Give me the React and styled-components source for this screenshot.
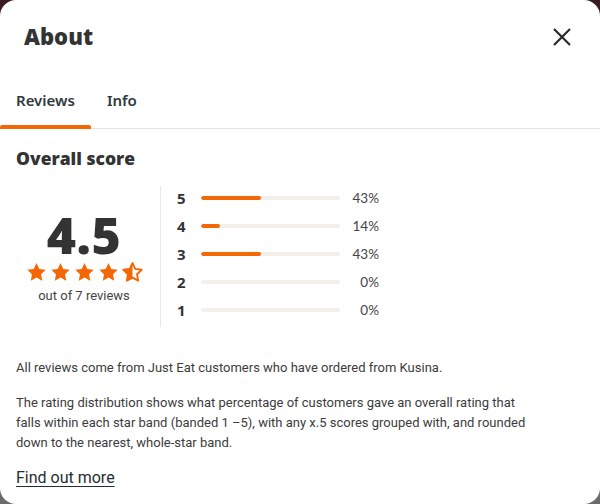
import React from "react";
import styled, { createGlobalStyle } from "styled-components";

const GlobalStyle = createGlobalStyle`
  html, body {
    margin: 0;
    padding: 0;
  }
  body {
    background: linear-gradient(180deg, #3b1a22 0%, #4a3034 40%, #6b6b6b 100%);
    font-family: "Roboto", "Liberation Sans", sans-serif;
    color: #242e30;
  }
`;

const Modal = styled.div`
  width: 600px;
  height: 504px;
  box-sizing: border-box;
  background: #fff;
  border-radius: 16px;
  overflow: hidden;
  display: flex;
  flex-direction: column;
`;

const Header = styled.div`
  display: flex;
  align-items: center;
  justify-content: space-between;
  height: 74px;
  padding: 0 28px 0 24px;
`;

const Title = styled.h1`
  margin: 0;
  font-family: "Open Sans", "Noto Sans", sans-serif;
  font-weight: 800;
  font-size: 22px;
  color: #333;
  margin-top: -2px;
`;

const CloseButton = styled.button`
  border: none;
  background: none;
  padding: 0;
  display: flex;
  cursor: pointer;
`;

const Tabs = styled.div`
  display: flex;
  border-bottom: 1px solid #e3e3e3;
  height: 54px;
`;

const Tab = styled.div`
  position: relative;
  padding: 0 16px;
  display: flex;
  align-items: center;
  margin-top: -3px;
  font-family: "Noto Sans", sans-serif;
  font-size: 15px;
  font-weight: 600;
  color: #2f3a3c;
  &::after {
    content: "";
    display: ${(p) => (p.$active ? "block" : "none")};
    position: absolute;
    left: 0;
    right: 0;
    bottom: -1px;
    height: 4px;
    border-radius: 2px 2px 0 0;
    background: #f36805;
  }
`;

const Body = styled.div`
  padding: 17px 16px 0;
`;

const SectionTitle = styled.h2`
  margin: 0;
  font-family: "Open Sans", "Noto Sans", sans-serif;
  font-weight: 800;
  font-size: 17.5px;
  color: #333;
`;

const Score = styled.div`
  display: flex;
  margin-top: 16px;
`;

const Summary = styled.div`
  width: 136px;
  padding-right: 8px;
  display: flex;
  flex-direction: column;
  align-items: center;
  justify-content: center;
  border-right: 1px solid #e6e6e6;
  height: 141px;
`;

const BigNumber = styled.div`
  font-family: "Noto Sans", sans-serif;
  font-weight: 900;
  font-size: 50px;
  line-height: 48px;
  color: #333;
  letter-spacing: 0.5px;
`;

const Stars = styled.div`
  display: flex;
  gap: 3px;
  margin-top: 3px;
`;

const ReviewCount = styled.div`
  margin-top: 5px;
  font-size: 13px;
  color: #444;
`;

const Distribution = styled.div`
  display: flex;
  flex-direction: column;
  gap: 10px;
  padding: 3px 0 0 16px;
`;

const Row = styled.div`
  display: flex;
  align-items: center;
  height: 18px;
`;

const Band = styled.span`
  width: 24px;
  font-family: "Noto Sans", sans-serif;
  font-weight: 700;
  font-size: 15px;
  color: #333;
`;

const Track = styled.div`
  width: 139px;
  height: 4px;
  border-radius: 2px;
  background: #f3f0ec;
  overflow: hidden;
`;

const Fill = styled.div`
  height: 100%;
  border-radius: 2px;
  background: #f36805;
`;

const Percent = styled.span`
  width: 39px;
  text-align: right;
  font-family: "Lato", sans-serif;
  font-size: 13.5px;
  color: #444;
`;

const Text = styled.p`
  margin: 0;
  margin-top: ${(p) => p.$top || 0}px;
  max-width: 512px;
  font-size: 13px;
  line-height: 20px;
  color: #3c3c3c;
`;

const MoreLink = styled.a`
  display: inline-block;
  margin-top: 15px;
  font-size: 16px;
  color: #242e30;
  text-decoration: underline;
  text-underline-offset: 3px;
`;

const starPath =
  "M12 1.2l3.2 6.7 7.3 1-5.3 5.1 1.3 7.3L12 17.8l-6.5 3.5 1.3-7.3-5.3-5.1 7.3-1z";

const Star = ({ half }) => (
  <svg width="21" height="21" viewBox="0 0 24 24">
    {half ? (
      <>
        <path
          d={starPath}
          fill="none"
          stroke="#f36805"
          strokeWidth="2.2"
          strokeLinejoin="round"
        />
        <path d="M12 1.2v16.6l-6.5 3.5 1.3-7.3-5.3-5.1 7.3-1z" fill="#f36805" />
      </>
    ) : (
      <path d={starPath} fill="#f36805" />
    )}
  </svg>
);

const ratings = [
  { band: 5, pct: 43 },
  { band: 4, pct: 14 },
  { band: 3, pct: 43 },
  { band: 2, pct: 0 },
  { band: 1, pct: 0 },
];

const App = () => (
  <>
    <GlobalStyle />
    <Modal>
      <Header>
        <Title>About</Title>
        <CloseButton aria-label="Close">
          <svg width="20" height="20" viewBox="0 0 20 20">
            <path d="M2 2l16 16M18 2L2 18" stroke="#2a2a2a" strokeWidth="2.2" />
          </svg>
        </CloseButton>
      </Header>
      <Tabs>
        <Tab $active>Reviews</Tab>
        <Tab>Info</Tab>
      </Tabs>
      <Body>
        <SectionTitle>Overall score</SectionTitle>
        <Score>
          <Summary>
            <BigNumber>4.5</BigNumber>
            <Stars>
              <Star />
              <Star />
              <Star />
              <Star />
              <Star half />
            </Stars>
            <ReviewCount>out of 7 reviews</ReviewCount>
          </Summary>
          <Distribution>
            {ratings.map((r) => (
              <Row key={r.band}>
                <Band>{r.band}</Band>
                <Track>
                  <Fill style={{ width: `${r.pct}%` }} />
                </Track>
                <Percent>{r.pct}%</Percent>
              </Row>
            ))}
          </Distribution>
        </Score>
        <Text $top={31}>
          All reviews come from Just Eat customers who have ordered from Kusina.
        </Text>
        <Text $top={15}>
          The rating distribution shows what percentage of customers gave an overall
          rating that falls within each star band (banded 1 –5), with any x.5 scores
          grouped with, and rounded down to the nearest, whole-star band.
        </Text>
        <MoreLink href="#">Find out more</MoreLink>
      </Body>
    </Modal>
  </>
);

export default App;
